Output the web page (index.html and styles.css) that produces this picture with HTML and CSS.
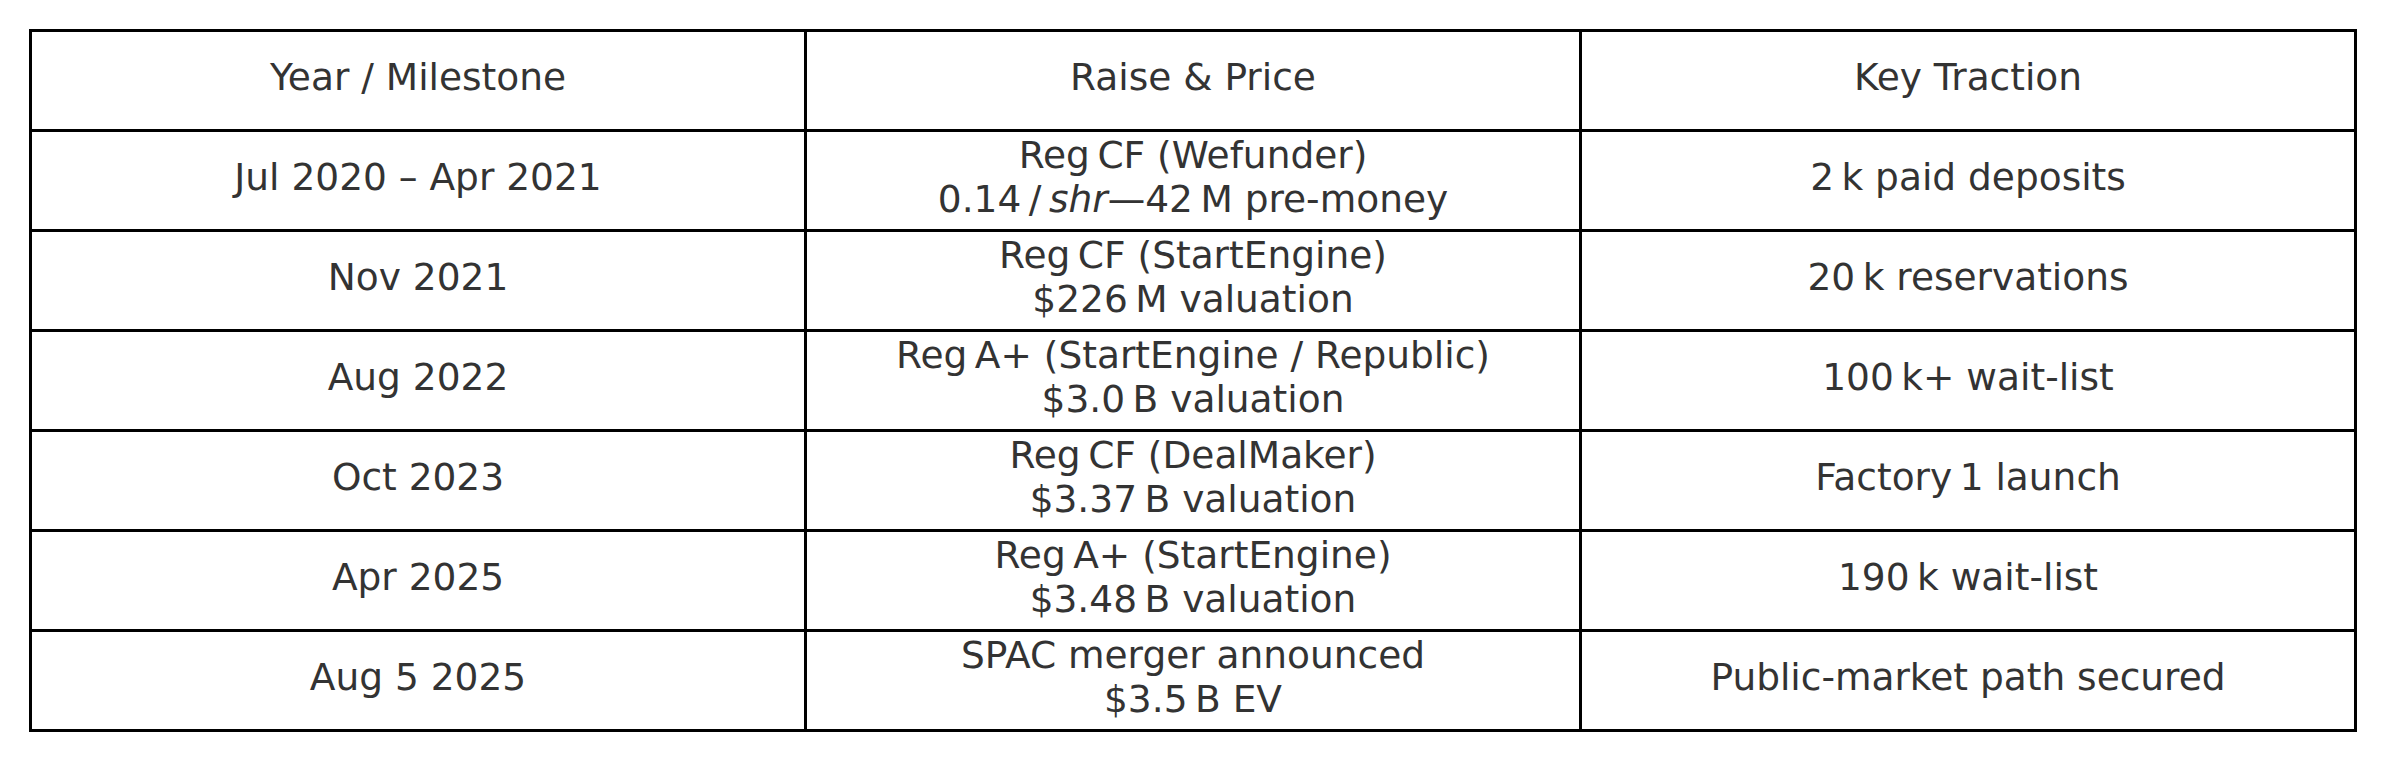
FILE: index.html
```html
<!DOCTYPE html>
<html>
<head>
<meta charset="utf-8">
<link rel="stylesheet" href="styles.css">
</head>
<body>
<div class="table">
  <div class="cell"><span>Year / Milestone</span></div>
  <div class="cell"><span>Raise &amp; Price</span></div>
  <div class="cell"><span>Key Traction</span></div>

  <div class="cell"><span>Jul 2020 – Apr 2021</span></div>
  <div class="cell"><span>Reg&thinsp;CF (Wefunder)<br>0.14&thinsp;/&thinsp;<i>shr</i>—42&thinsp;M pre-money</span></div>
  <div class="cell"><span>2&thinsp;k paid deposits</span></div>

  <div class="cell"><span>Nov 2021</span></div>
  <div class="cell"><span>Reg&thinsp;CF (StartEngine)<br>$226&thinsp;M valuation</span></div>
  <div class="cell"><span>20&thinsp;k reservations</span></div>

  <div class="cell"><span>Aug 2022</span></div>
  <div class="cell"><span>Reg&thinsp;A+ (StartEngine / Republic)<br>$3.0&thinsp;B valuation</span></div>
  <div class="cell"><span>100&thinsp;k+ wait-list</span></div>

  <div class="cell"><span>Oct 2023</span></div>
  <div class="cell"><span>Reg&thinsp;CF (DealMaker)<br>$3.37&thinsp;B valuation</span></div>
  <div class="cell"><span>Factory&thinsp;1 launch</span></div>

  <div class="cell"><span>Apr 2025</span></div>
  <div class="cell"><span>Reg&thinsp;A+ (StartEngine)<br>$3.48&thinsp;B valuation</span></div>
  <div class="cell"><span>190&thinsp;k wait-list</span></div>

  <div class="cell"><span>Aug 5 2025</span></div>
  <div class="cell"><span>SPAC merger announced<br>$3.5&thinsp;B EV</span></div>
  <div class="cell"><span>Public-market path secured</span></div>
</div>
</body>
</html>
```

FILE: styles.css
```css
html, body {
  margin: 0;
  padding: 0;
  background: #ffffff;
}

body {
  padding: 29px 28px 0 29px;
  font-family: "DejaVu Sans", "Liberation Sans", sans-serif;
  color: #333333;
}

.table {
  display: grid;
  grid-template-columns: 1fr 1fr 1fr;
  grid-auto-rows: 97px;
  gap: 3px;
  padding: 3px;
  background: #000000;
  width: 2328px;
  box-sizing: border-box;
}

.cell {
  background: #ffffff;
  display: flex;
  align-items: center;
  justify-content: center;
  text-align: center;
  font-size: 37.5px;
  line-height: normal;
  padding-bottom: 8px;
  box-sizing: border-box;
}

.cell i {
  font-style: italic;
}
```
